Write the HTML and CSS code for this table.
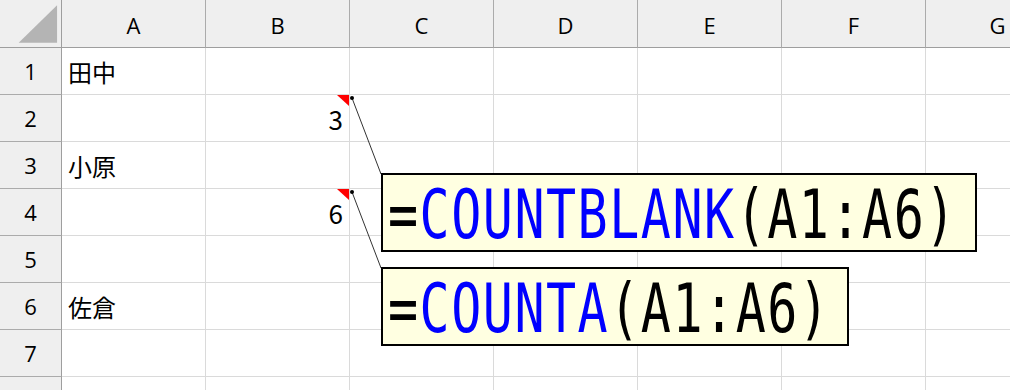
FILE: index.html
```html
<!DOCTYPE html>
<html lang="ja">
<head>
  <meta charset="UTF-8">
  <title>COUNTBLANK / COUNTA</title>
  <link rel="stylesheet" href="styles.css">
</head>
<body>
  <div class="sheet" id="sheet">
    <div class="corner">
      <svg width="62" height="48" viewBox="0 0 62 48"><polygon points="19,43 58,43 58,5" fill="#b4b4b4"/></svg>
    </div>
  </div>

  <!-- コメント（メモ）の吹き出し -->
  <svg class="leaders" width="1010" height="390">
    <line x1="352" y1="98" x2="381" y2="174" stroke="#333" stroke-width="1"/>
    <line x1="352" y1="192" x2="381" y2="268" stroke="#333" stroke-width="1"/>
    <circle cx="352" cy="98" r="2" fill="#000"/>
    <circle cx="352" cy="192" r="2" fill="#000"/>
  </svg>
  <div class="note note-blank"><span class="formula">=<span class="fn">COUNTBLANK</span>(A1:A6)</span></div>
  <div class="note note-counta"><span class="formula">=<span class="fn">COUNTA</span>(A1:A6)</span></div>

  <script>
    const colonnes = ["A", "B", "C", "D", "E", "F", "G"];
    const donnees = {
      1: { A: "田中" },
      2: { B: { v: "3", num: true, note: true } },
      3: { A: "小原" },
      4: { B: { v: "6", num: true, note: true } },
      6: { A: "佐倉" }
    };

    const sheet = document.getElementById("sheet");
    colonnes.forEach(c => {
      sheet.innerHTML += `<div class="col-head">${c}</div>`;
    });

    for (let r = 1; r <= 8; r++) {
      sheet.innerHTML += `<div class="row-head">${r <= 7 ? r : ""}</div>`;
      colonnes.forEach(c => {
        let cell = donnees[r]?.[c] || "";
        if (typeof cell === "string") cell = { v: cell };
        const cls = ["cell"];
        if (cell.num) cls.push("num");
        if (cell.note) cls.push("has-note");
        sheet.innerHTML += `<div class="${cls.join(" ")}">${cell.v || ""}</div>`;
      });
    }
  </script>
</body>
</html>
```

FILE: styles.css
```css
body {
  margin: 0;
  width: 1010px;
  height: 390px;
  overflow: hidden;
  background: #fff;
  position: relative;
}
.sheet {
  display: grid;
  grid-template-columns: 62px repeat(7, 144px);
  grid-template-rows: 48px repeat(8, 47px);
  width: 1010px;
  height: 390px;
  overflow: hidden;
}
.corner,
.col-head,
.row-head {
  background: #efefef;
  box-sizing: border-box;
  font-family: 'Open Sans', 'Noto Sans', sans-serif;
  font-size: 22px;
  color: #000;
  display: flex;
  align-items: center;
  justify-content: center;
}
.corner {
  border-right: 1px solid #9e9e9e;
  border-bottom: 1px solid #9e9e9e;
  align-items: flex-start;
  justify-content: flex-start;
}
.col-head {
  border-right: 1px solid #ababab;
  border-bottom: 1px solid #9e9e9e;
  padding-top: 2px;
}
.row-head {
  border-right: 1px solid #9e9e9e;
  border-bottom: 1px solid #ababab;
}
.cell {
  box-sizing: border-box;
  border-right: 1px solid #dadada;
  border-bottom: 1px solid #dadada;
  font-family: 'Noto Sans CJK JP', sans-serif;
  font-size: 24px;
  color: #000;
  display: flex;
  align-items: center;
  padding: 0 6px;
  white-space: nowrap;
  position: relative;
}
.cell.num {
  justify-content: flex-end;
  font-size: 26px;
}
/* 赤い三角 = メモあり */
.has-note::after {
  content: "";
  position: absolute;
  top: 0;
  right: 0;
  border-top: 11px solid #ff0000;
  border-left: 12px solid transparent;
}
.leaders {
  position: absolute;
  left: 0;
  top: 0;
}
.note {
  position: absolute;
  box-sizing: border-box;
  border: 2px solid #000;
  background: #ffffe1;
  display: flex;
  align-items: center;
  padding: 5px 0 0 5px;
}
.note-blank {
  left: 381px;
  top: 173px;
  width: 596px;
  height: 79px;
}
.note-counta {
  left: 381px;
  top: 267px;
  width: 468px;
  height: 79px;
}
/* 等幅の縦長書体に見せる */
.formula {
  display: inline-block;
  font-family: 'DejaVu Sans Mono', monospace;
  font-size: 50px;
  line-height: 1;
  letter-spacing: 1.5px;
  color: #000;
  white-space: nowrap;
  transform: scaleY(1.37);
}
.fn {
  color: #0000ff;
}
```
